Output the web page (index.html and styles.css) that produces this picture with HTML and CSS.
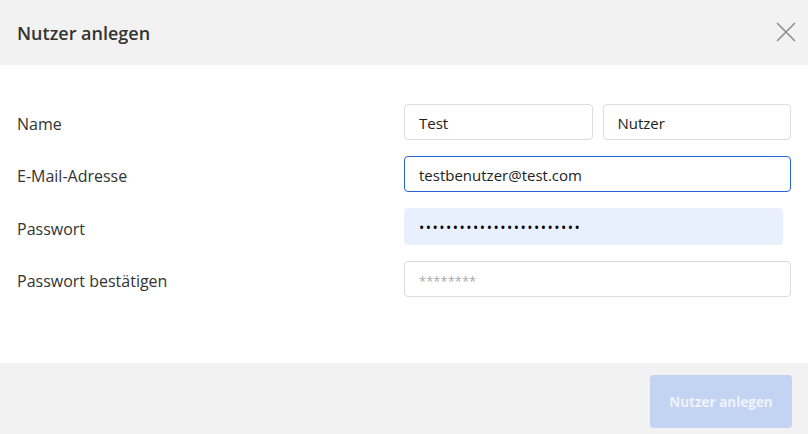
FILE: index.html
```html
<!DOCTYPE html>
<html lang="de">

<head>
  <meta charset="UTF-8">
  <meta name="viewport" content="width=device-width, initial-scale=1.0">
  <link rel="stylesheet" href="styles.css">
</head>

<body>
  <div class="dialog">
    <div class="dialog-header">
      <h1>Nutzer anlegen</h1>
      <button class="close" aria-label="Schließen">
        <svg width="20" height="20" viewBox="0 0 20 20">
          <path d="M1 1 L19 19 M19 1 L1 19" stroke="#8a8a8a" stroke-width="1.5" fill="none" />
        </svg>
      </button>
    </div>

    <div class="dialog-body">
      <div class="row">
        <label>Name</label>
        <div class="fields split">
          <input class="input" type="text" value="Test">
          <input class="input" type="text" value="Nutzer">
        </div>
      </div>
      <div class="row">
        <label>E-Mail-Adresse</label>
        <div class="fields">
          <input class="input focused" type="text" value="testbenutzer@test.com">
        </div>
      </div>
      <div class="row">
        <label>Passwort</label>
        <div class="fields">
          <input class="input autofill" type="password" value="testbenutzerpasswort1234">
        </div>
      </div>
      <div class="row">
        <label>Passwort bestätigen</label>
        <div class="fields">
          <input class="input" type="password" placeholder="********">
        </div>
      </div>
    </div>

    <div class="dialog-footer">
      <button class="submit" disabled>Nutzer anlegen</button>
    </div>
  </div>
</body>

</html>
```

FILE: styles.css
```css
* {
  box-sizing: border-box;
  margin: 0;
}

body {
  width: 808px;
  height: 434px;
  overflow: hidden;
  background: #fff;
  font-family: "Open Sans", "Noto Sans", sans-serif;
  color: #333;
}

.dialog {
  display: flex;
  flex-direction: column;
  height: 100%;
}

.dialog-header {
  height: 65px;
  background: #f2f2f2;
  display: flex;
  align-items: center;
  justify-content: space-between;
  padding: 0 12px 0 17px;
}

.dialog-header h1 {
  font-size: 18px;
  font-weight: 600;
  color: #333;
}

.close {
  border: none;
  background: none;
  padding: 0;
  width: 20px;
  height: 20px;
  margin-bottom: 2px;
}

.dialog-body {
  flex: 1;
  padding: 39px 17px 0 17px;
  display: flex;
  flex-direction: column;
  gap: 16.4px;
}

.row {
  display: flex;
  align-items: center;
  height: 36px;
}

.row label {
  flex: none;
  width: 387px;
  padding-top: 4px;
  font-size: 16px;
  color: #333;
}

.fields {
  flex: 1;
  min-width: 0;
  display: flex;
}

.fields.split {
  gap: 10px;
}

.input {
  flex: 1 1 0;
  width: 0;
  min-width: 0;
  height: 36px;
  border: 1px solid #dcdcdc;
  border-radius: 4px;
  padding: 2px 14px 0 14px;
  font-family: "Open Sans", "Noto Sans", sans-serif;
  font-size: 15px;
  color: #222;
  background: #fff;
  outline: none;
}

.input.focused {
  border-color: #2a63d9;
}

.input.autofill {
  flex: none;
  width: 379px;
  height: 37px;
  border: none;
  padding-left: 15px;
  background: #e8f0fe;
  font-size: 14px;
  letter-spacing: 1.5px;
  color: #000;
}

.input::placeholder {
  color: #aaa;
  font-size: 13px;
}

.dialog-footer {
  height: 71px;
  background: #f2f2f2;
  display: flex;
  justify-content: flex-end;
  align-items: flex-start;
  padding: 12px 16px 0 0;
}

.submit {
  width: 142px;
  height: 53px;
  border: none;
  border-radius: 4px;
  background: #c3d4f2;
  color: #eef3fc;
  font-family: "Open Sans", "Noto Sans", sans-serif;
  font-size: 13.5px;
  font-weight: 700;
}
```
